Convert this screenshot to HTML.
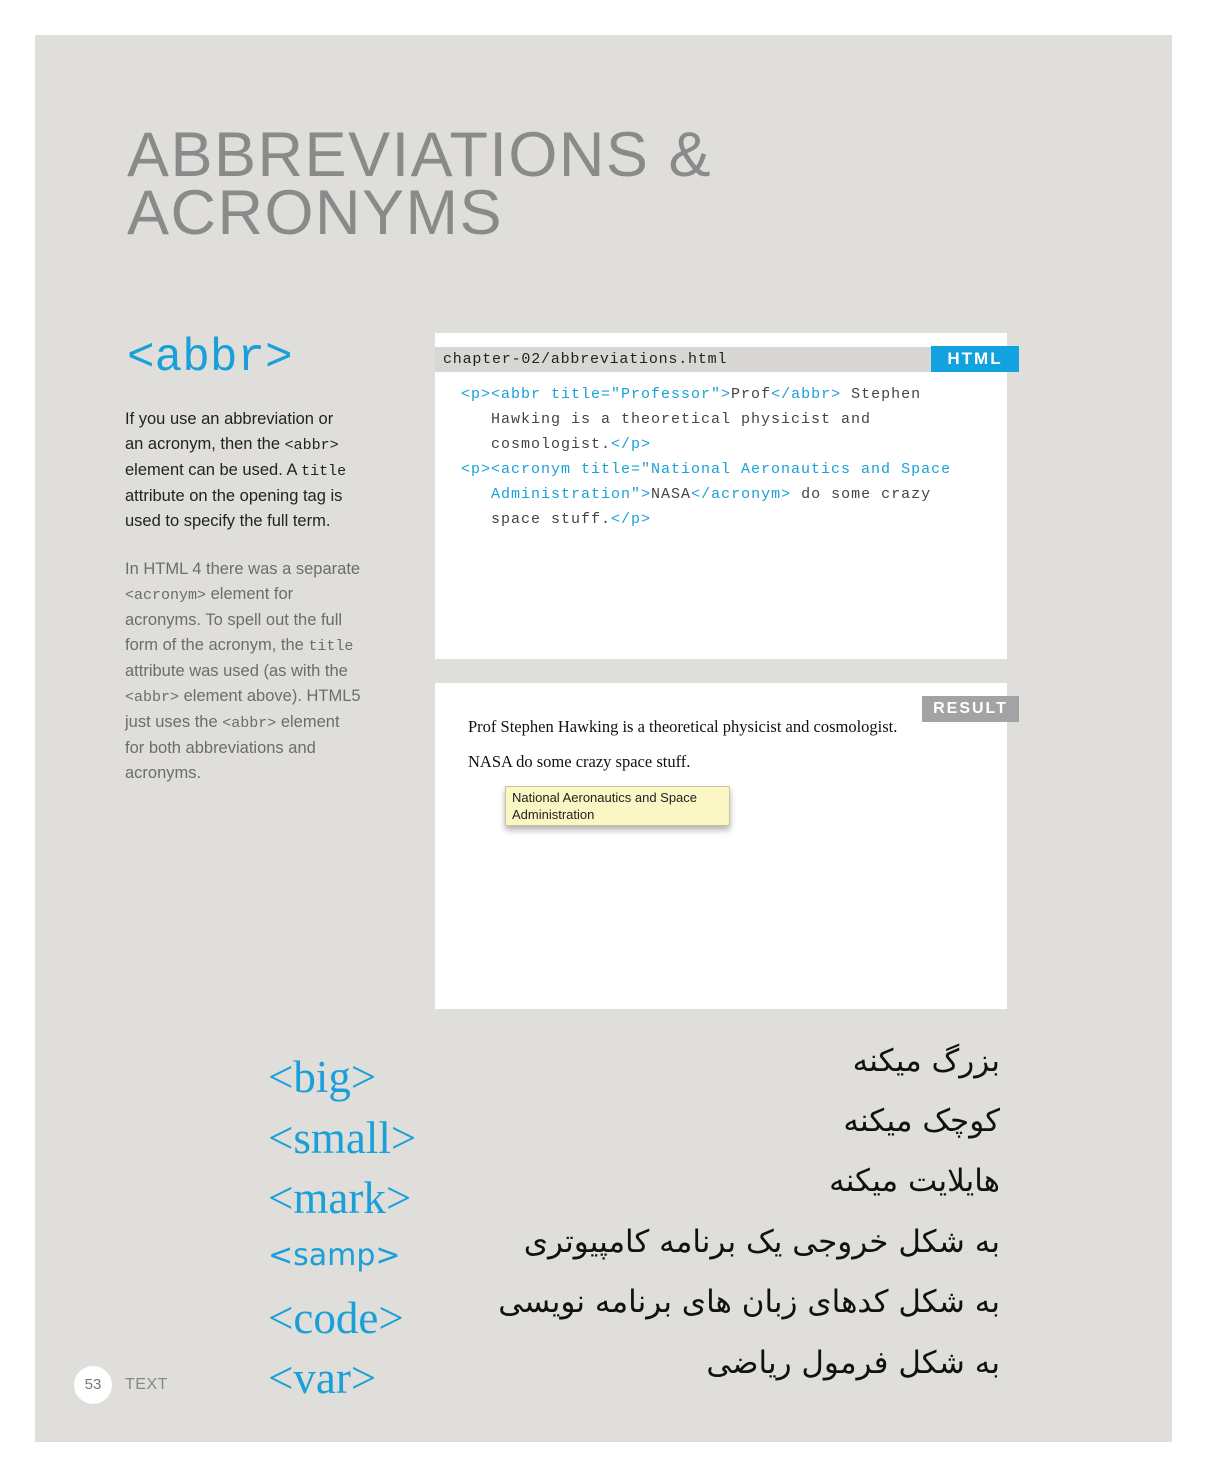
<!DOCTYPE html>
<html><head><meta charset="utf-8"><style>
*{margin:0;padding:0;box-sizing:border-box}
body{width:1206px;height:1478px;background:#fff;position:relative;overflow:hidden;font-family:"Liberation Sans",sans-serif}
.pg{position:absolute;left:35px;top:35px;width:1137px;height:1407px;background:#e0dedb}
.a{position:absolute;white-space:nowrap}
.title{left:127px;top:126px;font-size:63px;line-height:58px;color:#8a8a8b;letter-spacing:1.5px;font-weight:300}
.abbr{left:127px;top:332px;font-family:"Liberation Mono",monospace;font-size:46px;color:#1aa0d8}
.txt{left:125px;font-size:16.5px;line-height:25px;color:#222}
.txt.g{color:#6c6c6c}
.m{font-family:"Liberation Mono",monospace;font-size:15px}
.box{position:absolute;background:#fff}
.code{font-family:"Liberation Mono",monospace;font-size:15px;letter-spacing:1px;color:#444;line-height:25px}
.b{color:#1aa0d8}
.tag{font-family:"Liberation Serif",serif;font-size:45px;color:#1aa0d8;left:268px}
.ar{right:206px;font-family:"DejaVu Sans",sans-serif;font-size:31px;color:#111;direction:rtl}
</style></head><body>
<div class="pg"></div>
<div class="a title">ABBREVIATIONS &amp;<br>ACRONYMS</div>
<div class="a abbr">&lt;abbr&gt;</div>
<div class="a txt" style="top:407px">If you use an abbreviation or<br>an acronym, then the <span class="m">&lt;abbr&gt;</span><br>element can be used. A <span class="m">title</span><br>attribute on the opening tag is<br>used to specify the full term.</div>
<div class="a txt g" style="top:557px">In HTML 4 there was a separate<br><span class="m">&lt;acronym&gt;</span> element  for<br>acronyms. To spell out the full<br>form of the acronym, the <span class="m">title</span><br>attribute was used (as with the<br><span class="m">&lt;abbr&gt;</span> element above). HTML5<br>just uses the <span class="m">&lt;abbr&gt;</span> element<br>for both abbreviations and<br>acronyms.</div>

<div class="box" style="left:435px;top:333px;width:572px;height:326px"></div>
<div class="a" style="left:435px;top:347px;width:572px;height:25px;background:#d9d7d4"></div>
<div class="a code" style="left:443px;top:347px;color:#222;letter-spacing:0.8px">chapter-02/abbreviations.html</div>
<div class="a" style="left:931px;top:346px;width:88px;height:26px;background:#13a2e0;color:#fff;font-weight:bold;font-size:17px;letter-spacing:2px;text-align:center;line-height:26px">HTML</div>
<div class="a code" style="left:461px;top:382px"><span class="b">&lt;p&gt;&lt;abbr title="Professor"&gt;</span>Prof<span class="b">&lt;/abbr&gt;</span> Stephen<br>&nbsp;&nbsp; Hawking is a theoretical physicist and<br>&nbsp;&nbsp; cosmologist.<span class="b">&lt;/p&gt;</span><br><span class="b">&lt;p&gt;&lt;acronym title="National Aeronautics and Space</span><br>&nbsp;&nbsp; <span class="b">Administration"&gt;</span>NASA<span class="b">&lt;/acronym&gt;</span> do some crazy<br>&nbsp;&nbsp; space stuff.<span class="b">&lt;/p&gt;</span></div>

<div class="box" style="left:435px;top:683px;width:572px;height:326px"></div>
<div class="a" style="left:922px;top:696px;width:97px;height:26px;background:#a3a3a5;color:#fff;font-weight:bold;font-size:16px;letter-spacing:2px;text-align:center;line-height:26px">RESULT</div>
<div class="a" style="left:468px;top:717px;font-family:'Liberation Serif',serif;font-size:16.5px;color:#111">Prof Stephen Hawking is a theoretical physicist and cosmologist.</div>
<div class="a" style="left:468px;top:752px;font-family:'Liberation Serif',serif;font-size:16.5px;color:#111">NASA do some crazy space stuff.</div>
<div class="a" style="left:505px;top:786px;width:225px;height:40px;background:#fbf7c4;border:1px solid #c8c49a;box-shadow:0 4px 6px rgba(0,0,0,.3);font-size:13px;line-height:17px;padding:2px 6px;color:#222">National Aeronautics and Space<br>Administration</div>

<div class="a tag" style="top:1051px">&lt;big&gt;</div>
<div class="a tag" style="top:1112px">&lt;small&gt;</div>
<div class="a tag" style="top:1172px">&lt;mark&gt;</div>
<div class="a tag" style="top:1238px;font-family:'DejaVu Sans',sans-serif;font-size:30px">&lt;samp&gt;</div>
<div class="a tag" style="top:1292px">&lt;code&gt;</div>
<div class="a tag" style="top:1352px">&lt;var&gt;</div>

<div class="a ar" style="top:1043px">بزرگ میکنه</div>
<div class="a ar" style="top:1103px">کوچک میکنه</div>
<div class="a ar" style="top:1163px">هایلایت میکنه</div>
<div class="a ar" style="top:1224px">به شکل خروجی یک برنامه کامپیوتری</div>
<div class="a ar" style="top:1284px">به شکل کدهای زبان های برنامه نویسی</div>
<div class="a ar" style="top:1345px">به شکل فرمول ریاضی</div>

<div class="a" style="left:74px;top:1366px;width:38px;height:38px;border-radius:50%;background:#fff;color:#777;font-size:15px;text-align:center;line-height:38px">53</div>
<div class="a" style="left:125px;top:1376px;color:#888;font-size:16px;letter-spacing:0.5px">TEXT</div>
</body></html>
